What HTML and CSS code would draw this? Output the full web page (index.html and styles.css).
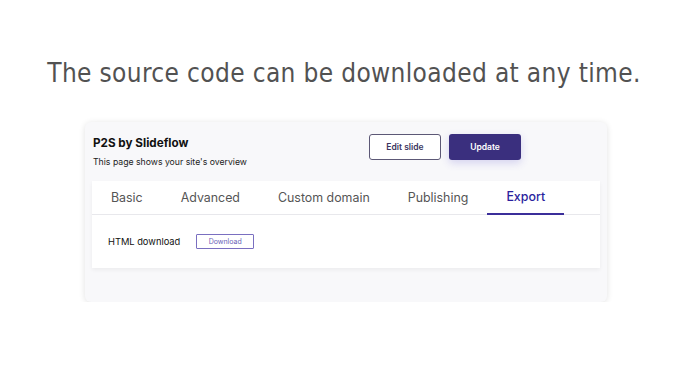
FILE: index.html
```html
<!DOCTYPE html>
<html lang="en">
<head>
    <meta charset="UTF-8">
    <meta name="viewport" content="width=device-width, initial-scale=1.0">
    <title>Export</title>
    <link rel="stylesheet" href="styles.css">
</head>
<body>

    <h1 class="headline">The source code can be downloaded at any time.</h1>

    <div class="panel">
        <div class="panel-header">
            <div class="site-info">
                <h2>P2S by Slideflow</h2>
                <p>This page shows your site's overview</p>
            </div>
            <div class="actions">
                <button class="btn-outline">Edit slide</button>
                <button class="btn-primary">Update</button>
            </div>
        </div>

        <div class="settings">
            <div class="tabs">
                <div class="tab">Basic</div>
                <div class="tab">Advanced</div>
                <div class="tab">Custom domain</div>
                <div class="tab">Publishing</div>
                <div class="tab active">Export</div>
            </div>
            <div class="tab-body">
                <span class="label">HTML download</span>
                <button class="btn-small">Download</button>
            </div>
        </div>
    </div>

</body>
</html>
```

FILE: styles.css
```css
body {
    margin: 0;
    background: #fff;
    font-family: Inter, "Liberation Sans", sans-serif;
}

.headline {
    margin: 53px 0 0;
    padding-left: 11px;
    height: 40px;
    line-height: 40px;
    text-align: center;
    white-space: nowrap;
    font-family: "DejaVu Sans", sans-serif;
    font-stretch: condensed;
    font-weight: 400;
    font-size: 26px;
    letter-spacing: 0.35px;
    color: #525252;
}

.panel {
    width: 522px;
    height: 180px;
    margin: 29px 0 0 85px;
    padding: 0 7px;
    box-sizing: border-box;
    background: #f8f8fa;
    border-radius: 6px;
    box-shadow: 0 1px 6px rgba(0, 0, 0, 0.12);
}

.panel-header {
    display: flex;
    align-items: flex-start;
    justify-content: space-between;
    height: 59px;
}

.site-info {
    padding: 14px 0 0 1px;
}

.site-info h2 {
    margin: 0;
    font-size: 11.7px;
    font-weight: 700;
    color: #111;
}

.site-info p {
    margin: 7px 0 0;
    font-size: 8.7px;
    color: #222;
}

.actions {
    display: flex;
    gap: 8px;
    padding: 12px 79px 0 0;
}

.actions button {
    width: 72px;
    height: 26px;
    border-radius: 3px;
    font-family: inherit;
    font-size: 8.5px;
    font-weight: 600;
    cursor: pointer;
}

.btn-outline {
    background: #fff;
    border: 1px solid #5c5876;
    color: #3a3460;
}

.btn-primary {
    background: #3a2f7e;
    border: none;
    color: #fff;
    box-shadow: 0 3px 8px rgba(70, 60, 200, 0.2);
}

.settings {
    height: 87px;
    background: #fff;
    box-shadow: 0 2px 4px rgba(0, 0, 0, 0.05);
}

.tabs {
    display: flex;
    height: 33px;
    border-bottom: 1px solid #e8e8ec;
}

.tab {
    padding: 0 19px;
    line-height: 33px;
    font-size: 12.4px;
    color: #555;
}

.tab.active {
    color: #2a1f9e;
    font-weight: 500;
    border-bottom: 2px solid #3b2e9a;
    line-height: 32px;
    height: 32px;
}

.tab-body {
    display: flex;
    align-items: center;
    padding: 19px 16px 0;
    gap: 16px;
}

.label {
    font-size: 9.3px;
    color: #111;
}

.btn-small {
    width: 58px;
    height: 15px;
    padding: 0;
    background: #fff;
    border: 1px solid #7a6fc0;
    border-radius: 1px;
    font-family: inherit;
    font-size: 7px;
    color: #6a5fb8;
}
```
